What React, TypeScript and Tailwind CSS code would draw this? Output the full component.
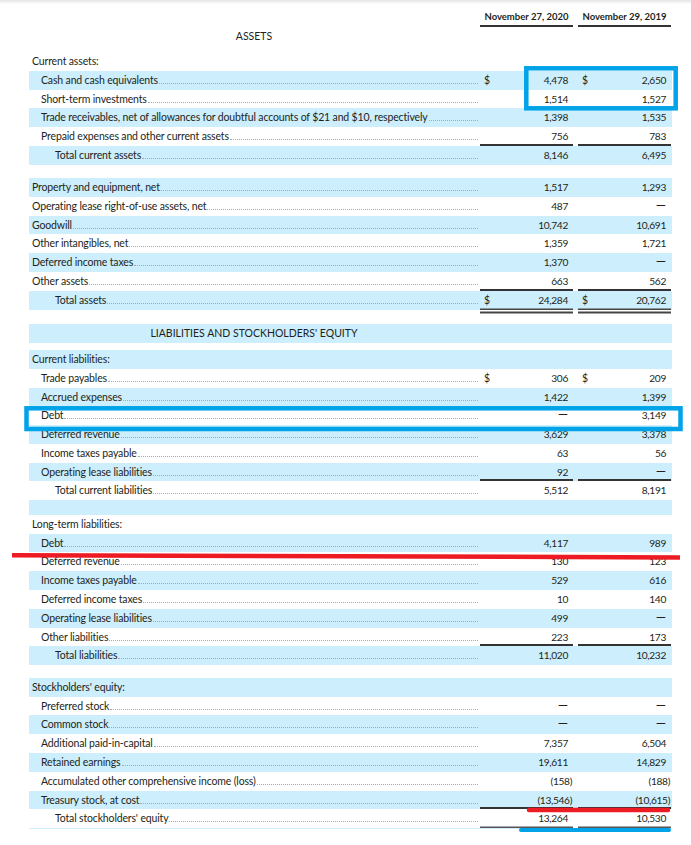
type Rule = 'none' | 'top' | 'double' | 'end';

type Line = {
  label: string;
  indent?: 0 | 1 | 2;
  a?: string;
  b?: string;
  cur?: boolean;
  blue?: boolean;
  head?: boolean;
  rule?: Rule;
};

const ruleClass: Record<Rule, string> = {
  none: '',
  top: 'shadow-[0_-2px_0_#333]',
  double: 'shadow-[0_-2px_0_#333,inset_0_-1.5px_0_#444,0_1.5px_0_#fff,0_3.5px_0_#444]',
  end: 'shadow-[0_-2px_0_#333,inset_0_-1.5px_0_#555]',
};

const assets: Line[] = [
  { label: 'Current assets:', head: true },
  { label: 'Cash and cash equivalents', indent: 1, a: '4,478', b: '2,650', cur: true, blue: true },
  { label: 'Short-term investments', indent: 1, a: '1,514', b: '1,527' },
  { label: 'Trade receivables, net of allowances for doubtful accounts of $21 and $10, respectively', indent: 1, a: '1,398', b: '1,535', blue: true },
  { label: 'Prepaid expenses and other current assets', indent: 1, a: '756', b: '783' },
  { label: 'Total current assets', indent: 2, a: '8,146', b: '6,495', blue: true, rule: 'top' },
];

const longAssets: Line[] = [
  { label: 'Property and equipment, net', a: '1,517', b: '1,293', blue: true },
  { label: 'Operating lease right-of-use assets, net', a: '487', b: '—' },
  { label: 'Goodwill', a: '10,742', b: '10,691', blue: true },
  { label: 'Other intangibles, net', a: '1,359', b: '1,721' },
  { label: 'Deferred income taxes', a: '1,370', b: '—', blue: true },
  { label: 'Other assets', a: '663', b: '562' },
  { label: 'Total assets', indent: 2, a: '24,284', b: '20,762', cur: true, blue: true, rule: 'double' },
];

const currentLiab: Line[] = [
  { label: 'Current liabilities:', head: true, blue: true },
  { label: 'Trade payables', indent: 1, a: '306', b: '209', cur: true },
  { label: 'Accrued expenses', indent: 1, a: '1,422', b: '1,399', blue: true },
  { label: 'Debt', indent: 1, a: '—', b: '3,149' },
  { label: 'Deferred revenue', indent: 1, a: '3,629', b: '3,378', blue: true },
  { label: 'Income taxes payable', indent: 1, a: '63', b: '56' },
  { label: 'Operating lease liabilities', indent: 1, a: '92', b: '—', blue: true },
  { label: 'Total current liabilities', indent: 2, a: '5,512', b: '8,191', rule: 'top' },
];

const longLiab: Line[] = [
  { label: 'Long-term liabilities:', head: true },
  { label: 'Debt', indent: 1, a: '4,117', b: '989', blue: true },
  { label: 'Deferred revenue', indent: 1, a: '130', b: '123' },
  { label: 'Income taxes payable', indent: 1, a: '529', b: '616', blue: true },
  { label: 'Deferred income taxes', indent: 1, a: '10', b: '140' },
  { label: 'Operating lease liabilities', indent: 1, a: '499', b: '—', blue: true },
  { label: 'Other liabilities', indent: 1, a: '223', b: '173' },
  { label: 'Total liabilities', indent: 2, a: '11,020', b: '10,232', blue: true, rule: 'top' },
];

const equity: Line[] = [
  { label: "Stockholders' equity:", head: true, blue: true },
  { label: 'Preferred stock', indent: 1, a: '—', b: '—' },
  { label: 'Common stock', indent: 1, a: '—', b: '—', blue: true },
  { label: 'Additional paid-in-capital', indent: 1, a: '7,357', b: '6,504' },
  { label: 'Retained earnings', indent: 1, a: '19,611', b: '14,829', blue: true },
  { label: 'Accumulated other comprehensive income (loss)', indent: 1, a: '(158)', b: '(188)' },
  { label: 'Treasury stock, at cost', indent: 1, a: '(13,546)', b: '(10,615)', blue: true },
  { label: "Total stockholders' equity", indent: 2, a: '13,264', b: '10,530', rule: 'end' },
];

function Value({ v }: { v?: string }) {
  if (v === '—') return <span className="translate-y-[1.5px] text-[13px] leading-none">—</span>;
  const neg = v?.startsWith('(');
  return (
    <span className="text-[10.2px] tracking-[-0.35px]">
      {neg ? v!.slice(0, -1) : v}
      {neg && <span className="-mr-[4px]">)</span>}
    </span>
  );
}

function Amount({ v, cur, rule, first }: { v?: string; cur?: boolean; rule: Rule; first?: boolean }) {
  return (
    <div className={`flex w-[93px] items-baseline justify-between pl-[4px] pr-[5px] ${first ? 'ml-[1px]' : 'ml-[5px]'} ${ruleClass[rule]}`}>
      <span>{cur ? '$' : ''}</span>
      <Value v={v} />
    </div>
  );
}

function Row({ r }: { r: Line }) {
  const indent = r.indent === 2 ? 'pl-[26px]' : r.indent === 1 ? 'pl-[12px]' : 'pl-[3px]';
  const rule = r.rule ?? 'none';
  return (
    <div className={`flex h-[18.8px] leading-[18.8px] ${r.blue ? 'bg-[#cdeefc]' : ''}`}>
      <div className={`flex flex-1 items-baseline pr-[1px] ${indent}`}>
        <span className="whitespace-nowrap tracking-[-0.15px]">{r.label}</span>
        {!r.head && <span className="ml-[1px] h-0 flex-1 border-b border-dotted border-[#a9a9a9]" />}
      </div>
      {r.head ? (
        <div className="w-[192px]" />
      ) : (
        <>
          <Amount v={r.a} cur={r.cur} rule={rule} first />
          <Amount v={r.b} cur={r.cur} rule={rule} />
          <div className="w-[1px]" />
        </>
      )}
    </div>
  );
}

function Section({ rows }: { rows: Line[] }) {
  return (
    <>
      {rows.map((r, i) => (
        <Row key={i} r={r} />
      ))}
    </>
  );
}

export default function App() {
  return (
    <div className="relative h-[845px] w-[691px] overflow-hidden bg-white font-['Lato',sans-serif] text-[10.5px] text-[#231f20]">
      <div className="h-[4px] bg-linear-to-b from-[#e4e4e4] to-white" />

      <div className="ml-[29px] mt-[4px] w-[643px]">
        {/* column heads */}
        <div className="flex h-[19px] text-[9.5px] font-bold leading-[17px]">
          <div className="flex-1" />
          <div className="ml-[1px] w-[93px] border-b-2 border-[#333] text-center">November 27, 2020</div>
          <div className="ml-[5px] w-[93px] border-b-2 border-[#333] text-center">November 29, 2019</div>
          <div className="w-[1px]" />
        </div>

        <div className="flex h-[18.8px] leading-[18.8px]">
          <div className="w-[450px] text-center">ASSETS</div>
        </div>
        <div className="h-[6.2px]" />

        <Section rows={assets} />
        <div className="h-[13.2px]" />
        <Section rows={longAssets} />
        <div className="h-[14.4px]" />

        <div className="flex h-[18.8px] bg-[#cdeefc] leading-[18.8px]">
          <div className="w-[450px] text-center">LIABILITIES AND STOCKHOLDERS&apos; EQUITY</div>
        </div>
        <div className="h-[7.2px]" />

        <Section rows={currentLiab} />
        <div className="h-[14.6px] bg-[#cdeefc]" />
        <Section rows={longLiab} />
        <div className="h-[12.6px]" />
        <Section rows={equity} />
        <div className="h-[1px] bg-[#cdeefc]" />
      </div>

      {/* hand-drawn markup on top of the statement */}
      <svg className="pointer-events-none absolute inset-0" width="691" height="845" viewBox="0 0 691 845">
        <rect x="526.3" y="68.3" width="149.4" height="40" fill="none" stroke="#00a2e8" strokeWidth="4.5" />
        <rect x="26.5" y="408.3" width="654" height="20.7" fill="none" stroke="#00a2e8" strokeWidth="4.5" />
        <polyline points="12,555.3 345,556.2 680,557.4" fill="none" stroke="#ed1c24" strokeWidth="4.5" />
        <line x1="529" y1="810" x2="668" y2="810" stroke="#ed1c24" strokeWidth="4.5" strokeLinecap="round" />
        <line x1="521" y1="830" x2="669" y2="830" stroke="#00a2e8" strokeWidth="4" strokeLinecap="round" />
      </svg>
    </div>
  );
}
